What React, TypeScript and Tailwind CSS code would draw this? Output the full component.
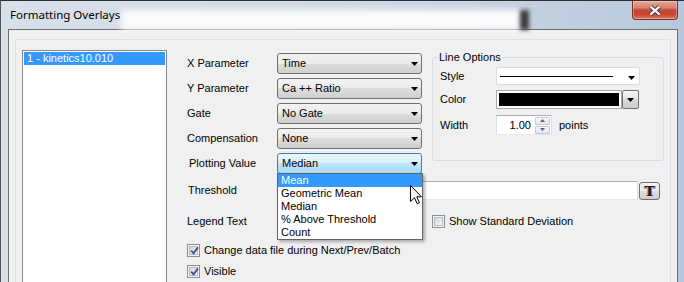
import React from 'react';

interface ComboProps {
  value: string;
  focused?: boolean;
  children?: React.ReactNode;
}

function DownArrow() {
  return (
    <svg width="7" height="4" viewBox="0 0 7 4" className="shrink-0">
      <path d="M0 0H7L3.5 4Z" fill="#000" />
    </svg>
  );
}

function SpinArrow({ up }: { up?: boolean }) {
  return (
    <svg width="5" height="3" viewBox="0 0 5 3">
      <path d={up ? 'M0 3H5L2.5 0Z' : 'M0 0H5L2.5 3Z'} fill="#4a6390" />
    </svg>
  );
}

function Combo({ value, focused = false, children }: ComboProps) {
  return (
    <div className="relative w-[145px]">
      <div
        className={`flex h-[21px] items-center rounded-[3px] border pl-[4px] pr-[3px] ${
          focused
            ? 'border-[#3c7fb1] bg-[linear-gradient(#eaf6fd,#d9f0fc_50%,#bee6fd_50%,#a7d9f5)]'
            : 'border-[#707070] bg-[linear-gradient(#f2f2f2,#ebebeb_50%,#dddddd_50%,#cfcfcf)]'
        }`}
      >
        <span className="flex-1 leading-[13px]">{value}</span>
        <DownArrow />
      </div>
      {children}
    </div>
  );
}

function Checkbox({ checked = false }: { checked?: boolean }) {
  return (
    <div className="flex h-[13px] w-[13px] shrink-0 items-center justify-center border border-[#8e8f8f] bg-[#f4f4f4]">
      <div className="relative flex h-[9px] w-[9px] items-center justify-center border border-[#b7bbc2] bg-[linear-gradient(135deg,#d3d6db,#f8f8f8)]">
        {checked && (
          <svg width="9" height="9" viewBox="0 0 9 9" className="absolute left-[0px] top-[-1px]">
            <path d="M1.2 4.6L3.6 7.4L8 1.4" fill="none" stroke="#3b4d93" strokeWidth="1.8" />
          </svg>
        )}
      </div>
    </div>
  );
}

const textbox = 'border border-t-[#abadb3] border-x-[#dbdfe6] border-b-[#e3e9ef] bg-white';

const rows = [
  { label: 'X Parameter', value: 'Time' },
  { label: 'Y Parameter', value: 'Ca ++ Ratio' },
  { label: 'Gate', value: 'No Gate' },
  { label: 'Compensation', value: 'None' },
];

const plotOptions = ['Mean', 'Geometric Mean', 'Median', '% Above Threshold', 'Count'];

function PlotDropdown() {
  return (
    <div className="absolute left-0 top-[20px] z-10 w-[146px] border border-[#646464] bg-white shadow-[2px_2px_3px_rgba(0,0,0,0.3)]">
      {plotOptions.map((opt, i) => (
        <div
          key={opt}
          className={`h-[13px] pl-[3px] leading-[13px] ${i === 0 ? 'bg-[#3399ff] text-white' : ''}`}
        >
          {opt}
        </div>
      ))}
      {/* mouse pointer */}
      <svg width="12" height="20" viewBox="0 0 12 20" className="absolute left-[132px] top-[11px]">
        <path
          d="M0.5 0.5V16.5L4.5 12.8L7.2 18.8L9.4 17.8L6.8 11.8H11.5Z"
          fill="#f4f6f8"
          stroke="#000"
          strokeLinejoin="round"
        />
      </svg>
    </div>
  );
}

function LineOptions() {
  return (
    <fieldset className="-mt-[2px] ml-[10px] w-[232px] rounded-[3px] border border-[#d5dfe5] pb-[25px] pl-[7px] pr-[7px] pt-[3px]">
      <legend className="-ml-[2px] px-[1px] leading-[13px]">Line Options</legend>
      <div className="flex flex-col gap-[5px]">
        <div className="flex h-[18px] items-center">
          <span className="w-[56px]">Style</span>
          <div className="flex h-[18px] w-[144px] items-center rounded-[2px] border border-[#dcdcdc] bg-white">
            <span className="ml-[3px] h-[1px] w-[113px] bg-black" />
            <span className="ml-auto mr-[4px] mt-[3px] flex">
              <DownArrow />
            </span>
          </div>
        </div>
        <div className="flex h-[19px] items-center">
          <span className="w-[56px]">Color</span>
          <div className="flex h-[19px] w-[143px]">
            <div className="flex-1 border border-[#a9a9a9] bg-white p-[2px]">
              <div className="h-full bg-black" />
            </div>
            <div className="flex w-[17px] items-center justify-center rounded-[2px] border border-[#707070] bg-[linear-gradient(#f4f4f4,#e6e6e6_50%,#d9d9d9_50%,#cdcdcd)]">
              <DownArrow />
            </div>
          </div>
        </div>
        <div className="mt-[1px] flex h-[20px] items-center">
          <span className="w-[56px]">Width</span>
          <div className={`flex h-[20px] w-[56px] items-center ${textbox}`}>
            <span className="flex-1 pr-[4px] text-right leading-[13px]">1.00</span>
            <div className="mr-[1px] flex h-[17px] w-[15px] flex-col gap-[1px]">
              <div className="flex h-[8px] items-center justify-center rounded-[1px] border border-[#c3cad3] bg-[linear-gradient(#f7f8fa,#e3e6ea)]">
                <SpinArrow up />
              </div>
              <div className="flex h-[8px] items-center justify-center rounded-[1px] border border-[#c3cad3] bg-[linear-gradient(#f7f8fa,#e3e6ea)]">
                <SpinArrow />
              </div>
            </div>
          </div>
          <span className="ml-[7px]">points</span>
        </div>
      </div>
    </fieldset>
  );
}

function CloseButton() {
  return (
    <div className="ml-auto mr-[6px] flex h-[19px] w-[46px] items-center justify-center rounded-b-[4px] border border-t-0 border-[#7a3328] bg-[linear-gradient(#e6a797,#d98070_38%,#c6452f_52%,#c94832_75%,#dd7a64)] shadow-[inset_0_0_0_1px_rgba(255,255,255,0.3)]">
      <svg width="14" height="11" viewBox="0 0 14 11">
        <path d="M2.5 1.5L11.5 9.5M11.5 1.5L2.5 9.5" stroke="#4a4a4a" strokeWidth="4.2" />
        <path d="M2.5 1.5L11.5 9.5M11.5 1.5L2.5 9.5" stroke="#ffffff" strokeWidth="2.2" />
      </svg>
    </div>
  );
}

export default function App() {
  return (
    <div className="flex h-[282px] w-[684px] flex-col overflow-hidden border-l border-[#555] bg-[linear-gradient(90deg,#d8e0ea,#cdd8e5_55%,#b8c8dc)] font-['Liberation_Sans',Arial,sans-serif] text-[11px] text-black">
      {/* title bar */}
      <div className="relative flex h-[29px] shrink-0 items-start border-t border-[#2e2e2e]">
        <div className="absolute left-[120px] top-[9px] h-[20px] w-[400px] bg-[#fcfcfc] blur-[3px]" />
        <div className="absolute left-[519px] top-[9px] h-[20px] w-[9px] bg-[#3e3e3e] blur-[2px]" />
        <div className="relative pl-[9px] pt-[6px] font-['Noto_Sans',sans-serif] text-[11.5px] leading-[16px]">
          Formatting Overlays
        </div>
        <CloseButton />
      </div>

      {/* window body */}
      <div className="flex min-h-0 flex-1">
        <div className="w-[7px] shrink-0 bg-[#d9dee4]" />
        <div className="flex-1 border-l border-r border-t border-[#6e6e6e] bg-[#f0f0f0] px-[6px] pt-[9px]">
          <div className="flex h-full items-start rounded-t-[2px] border-l border-r border-t border-[#d9e1ea] pl-[6px] pt-[10px]">
            <div className="h-[240px] w-[145px] shrink-0 border border-[#828790] bg-white p-[1px]">
              <div className="h-[13px] bg-[#3399ff] pl-[3px] leading-[13px] text-white">1 - kinetics10.010</div>
            </div>

            <div className="ml-[20px] flex flex-col pt-[3px]">
              <div className="flex items-start">
                <div className="flex w-[235px] flex-col gap-[4px]">
                  {rows.map((r) => (
                    <div key={r.label} className="flex items-center">
                      <span className="w-[90px]">{r.label}</span>
                      <Combo value={r.value} />
                    </div>
                  ))}
                  <div className="flex items-center">
                    <span className="w-[90px] pl-[2px]">Plotting Value</span>
                    <Combo value="Median" focused>
                      <PlotDropdown />
                    </Combo>
                  </div>
                </div>
                <LineOptions />
              </div>

              <div className="mt-[7px] flex items-start">
                <span className="w-[90px] pl-[1px] leading-[19px]">Threshold</span>
                <div className={`h-[19px] w-[361px] ${textbox}`} />
                <div className="ml-[1px] mt-[1px] flex h-[18px] w-[21px] items-center justify-center rounded-[3px] border border-[#707070] bg-[linear-gradient(#f2f2f2,#ebebeb_50%,#dddddd_50%,#cfcfcf)] font-['Liberation_Serif',serif] text-[15px] font-bold leading-none text-[#111] [text-shadow:-1px_0_#e8891c,1px_0_#2b6fd6]">
                  T
                </div>
              </div>

              <div className="mt-[12px] flex items-center">
                <span className="w-[90px]">Legend Text</span>
                <div className={`h-[19px] w-[145px] ${textbox}`} />
                <div className="ml-[10px] flex items-center">
                  <Checkbox />
                  <span className="ml-[4px] leading-[13px]">Show Standard Deviation</span>
                </div>
              </div>

              <div className="mt-[13px] flex h-[13px] items-center">
                <Checkbox checked />
                <span className="ml-[4px] leading-[13px]">Change data file during Next/Prev/Batch</span>
              </div>
              <div className="mt-[8px] flex h-[13px] items-center">
                <Checkbox checked />
                <span className="ml-[4px] leading-[13px]">Visible</span>
              </div>
            </div>
          </div>
        </div>
        <div className="w-[6px] shrink-0" />
      </div>
    </div>
  );
}
